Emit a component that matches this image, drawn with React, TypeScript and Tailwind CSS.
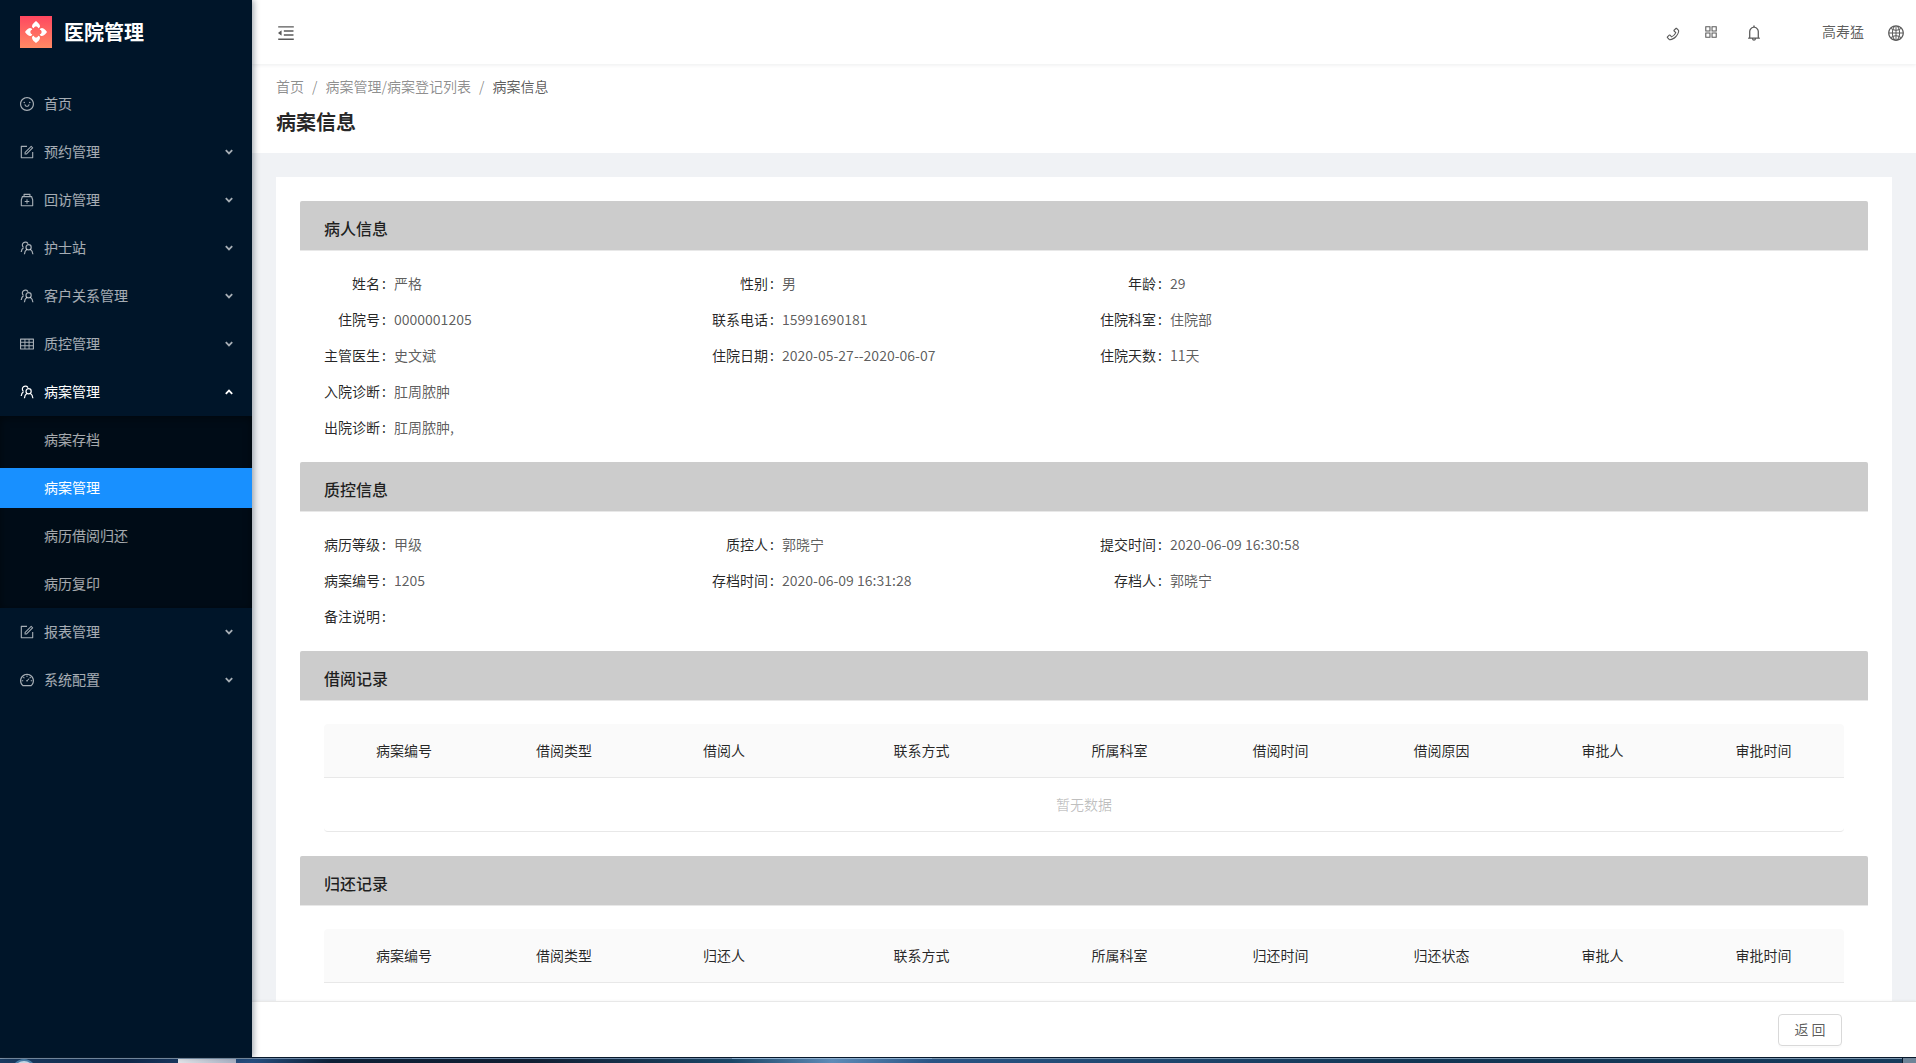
import { useState } from 'react'
import type { ComponentType, ReactNode } from 'react'
import {
  AiOutlineAppstore,
  AiOutlineBell,
  AiOutlineDashboard,
  AiOutlineForm,
  AiOutlineGlobal,
  AiOutlineMedicineBox,
  AiOutlineMenuFold,
  AiOutlinePhone,
  AiOutlineSmile,
  AiOutlineTable,
} from 'react-icons/ai'

interface IconProps {
  className?: string
}

interface MenuItem {
  key: string
  label: string
  icon: ComponentType<IconProps>
  hasChildren?: boolean
  children?: string[]
}

interface Field {
  label: string
  value: string
}

function PeopleIcon({ className }: IconProps) {
  return (
    <svg viewBox="-1 -1 16 16" width="16" height="16" fill="none" stroke="currentColor" strokeWidth="1.2" className={className}>
      <path d="M3.4 6.4A3 3 0 1 1 8 2.7M3.6 6.6C2.2 7.6 1.4 9.2 1.2 11" />
      <circle cx="8.6" cy="6.3" r="2.6" />
      <path d="M7 8.3C5.4 9.4 4.6 11 4.4 13.2M10.2 8.3C11.8 9.4 12.7 11 12.9 13.2" />
    </svg>
  )
}

function Chevron({ open }: { open: boolean }) {
  return (
    <svg viewBox="0 0 8 6" width="8" height="6" fill="none" stroke="currentColor" strokeWidth="1.8">
      <path d={open ? 'M0.8 4.8L4 1.6L7.2 4.8' : 'M0.8 1.2L4 4.4L7.2 1.2'} />
    </svg>
  )
}

function Logo() {
  const petal =
    'M16 5C17.3 6 19.8 8 20 10C20 11.3 19.2 12.2 18.2 12.2C17.9 11 17.2 10.4 16 10.4C14.8 10.4 14.1 11 13.8 12.2C12.8 12.2 12 11.3 12 10C12.2 8 14.7 6 16 5Z'
  return (
    <svg viewBox="0 0 32 32" width="32" height="32">
      <defs>
        <linearGradient id="logo-bg" x1="0" y1="0" x2="0" y2="1">
          <stop offset="0" stopColor="#ff4760" />
          <stop offset="1" stopColor="#ff8a64" />
        </linearGradient>
      </defs>
      <rect width="32" height="32" fill="url(#logo-bg)" />
      <g fill="#fff">
        <path d={petal} />
        <path d={petal} transform="rotate(90 16 16)" />
        <path d={petal} transform="rotate(180 16 16)" />
        <path d={petal} transform="rotate(270 16 16)" />
      </g>
    </svg>
  )
}

const menu: MenuItem[] = [
  { key: 'home', label: '首页', icon: AiOutlineSmile },
  { key: 'booking', label: '预约管理', icon: AiOutlineForm, hasChildren: true },
  { key: 'revisit', label: '回访管理', icon: AiOutlineMedicineBox, hasChildren: true },
  { key: 'nurse', label: '护士站', icon: PeopleIcon, hasChildren: true },
  { key: 'crm', label: '客户关系管理', icon: PeopleIcon, hasChildren: true },
  { key: 'quality', label: '质控管理', icon: AiOutlineTable, hasChildren: true },
  {
    key: 'records',
    label: '病案管理',
    icon: PeopleIcon,
    hasChildren: true,
    children: ['病案存档', '病案管理', '病历借阅归还', '病历复印'],
  },
  { key: 'reports', label: '报表管理', icon: AiOutlineForm, hasChildren: true },
  { key: 'system', label: '系统配置', icon: AiOutlineDashboard, hasChildren: true },
]

const patientRows: Field[][] = [
  [
    { label: '姓名', value: '严格' },
    { label: '性别', value: '男' },
    { label: '年龄', value: '29' },
  ],
  [
    { label: '住院号', value: '0000001205' },
    { label: '联系电话', value: '15991690181' },
    { label: '住院科室', value: '住院部' },
  ],
  [
    { label: '主管医生', value: '史文斌' },
    { label: '住院日期', value: '2020-05-27--2020-06-07' },
    { label: '住院天数', value: '11天' },
  ],
  [{ label: '入院诊断', value: '肛周脓肿' }],
  [{ label: '出院诊断', value: '肛周脓肿,' }],
]

const qualityRows: Field[][] = [
  [
    { label: '病历等级', value: '甲级' },
    { label: '质控人', value: '郭晓宁' },
    { label: '提交时间', value: '2020-06-09 16:30:58' },
  ],
  [
    { label: '病案编号', value: '1205' },
    { label: '存档时间', value: '2020-06-09 16:31:28' },
    { label: '存档人', value: '郭晓宁' },
  ],
  [{ label: '备注说明', value: '' }],
]

const borrowColumns = ['病案编号', '借阅类型', '借阅人', '联系方式', '所属科室', '借阅时间', '借阅原因', '审批人', '审批时间']
const returnColumns = ['病案编号', '借阅类型', '归还人', '联系方式', '所属科室', '归还时间', '归还状态', '审批人', '审批时间']

function Sidebar() {
  const [openKey, setOpenKey] = useState('records')
  const [selected, setSelected] = useState('病案管理')

  return (
    <aside className="relative z-10 w-[252px] shrink-0 bg-[#001529] shadow-[2px_0_6px_rgba(0,21,41,0.35)]">
      <a href="#home" className="flex h-16 items-center gap-3 pl-5 text-white">
        <Logo />
        <span className="text-xl font-bold">医院管理</span>
      </a>
      <nav className="pt-4">
        {menu.map((item) => {
          const Icon = item.icon
          const open = openKey === item.key
          return (
            <div key={item.key}>
              <button
                type="button"
                onClick={() => setOpenKey(open ? '' : item.key)}
                className={`flex h-12 w-full items-center gap-[9px] px-[19px] text-left ${open ? 'text-white' : 'text-white/65'}`}
              >
                <Icon className="size-4" />
                <span className="flex-1 pb-0.5">{item.label}</span>
                {item.hasChildren && <Chevron open={open} />}
              </button>
              {open && item.children && (
                <ul className="bg-[#000c17] shadow-[inset_0_2px_8px_rgba(0,0,0,0.45)]">
                  {item.children.map((child) => (
                    <li key={child} className="py-1">
                      <a
                        href={`#${child}`}
                        onClick={() => setSelected(child)}
                        className={`flex h-10 items-center pb-0.5 pl-11 ${selected === child ? 'bg-[#1890ff] text-white' : 'text-white/65'}`}
                      >
                        {child}
                      </a>
                    </li>
                  ))}
                </ul>
              )}
            </div>
          )
        })}
      </nav>
    </aside>
  )
}

function TopBar() {
  return (
    <header className="relative flex h-16 shrink-0 items-center justify-between bg-white pr-[11px] pl-6 text-black/65 shadow-[0_1px_4px_rgba(0,21,41,0.08)]">
      <button type="button" aria-label="收起菜单" className="pt-0.5">
        <AiOutlineMenuFold className="size-5" />
      </button>
      <div className="flex items-center">
        <button type="button" aria-label="电话" className="mr-[22px] pt-1">
          <AiOutlinePhone className="size-4" />
        </button>
        <button type="button" aria-label="应用" className="mr-[26px]">
          <AiOutlineAppstore className="size-4" />
        </button>
        <button type="button" aria-label="通知" className="mr-[59px] pt-0.5">
          <AiOutlineBell className="size-[18px]" />
        </button>
        <a href="#account" className="mr-[23px] pb-0.5">
          高寿猛
        </a>
        <button type="button" aria-label="语言" className="pt-0.5">
          <AiOutlineGlobal className="size-[18px]" />
        </button>
      </div>
    </header>
  )
}

function PageHeader() {
  return (
    <div className="bg-white px-6 pt-[11px] pb-[15px]">
      <nav aria-label="面包屑" className="flex h-[22px] items-center gap-2 text-black/45">
        <a href="#home">首页</a>
        <span>/</span>
        <a href="#list">病案管理/病案登记列表</a>
        <span>/</span>
        <span className="text-black/65">病案信息</span>
      </nav>
      <h1 className="mt-[9px] text-xl leading-8 font-bold text-black/85">病案信息</h1>
    </div>
  )
}

function Section({ title, children }: { title: string; children: ReactNode }) {
  return (
    <section>
      <h2 className="-mb-px flex h-[50px] items-center rounded-t-xs border-b border-[#e8e8e8] bg-[#ccc] px-6 pt-1 text-base font-medium text-black/85">
        {title}
      </h2>
      <div className="p-6">{children}</div>
    </section>
  )
}

function FieldRows({ rows }: { rows: Field[][] }) {
  return (
    <div className="-mb-4">
      {rows.map((row) => (
        <dl key={row[0].label} className="grid grid-cols-4 gap-x-8 pb-[18px] leading-[18px]">
          {row.map((field) => (
            <div key={field.label} className="flex">
              <dt className="mr-2 w-[62px] shrink-0 text-right text-black/85">
                {field.label}
                <span className="ml-0.5">:</span>
              </dt>
              <dd className="text-black/65">{field.value}</dd>
            </div>
          ))}
        </dl>
      ))}
    </div>
  )
}

function RecordTable({ columns, emptyText }: { columns: string[]; emptyText?: string }) {
  return (
    <table className="w-full table-fixed border-separate border-spacing-0">
      <colgroup>
        <col className="w-[160px]" />
        <col className="w-[160px]" />
        <col className="w-[160px]" />
        <col className="w-[235px]" />
      </colgroup>
      <thead>
        <tr>
          {columns.map((column) => (
            <th
              key={column}
              className="h-[54px] border-b border-[#e8e8e8] bg-[#fafafa] pb-0.5 font-normal text-black/85 first:rounded-tl last:rounded-tr"
            >
              {column}
            </th>
          ))}
        </tr>
      </thead>
      {emptyText && (
        <tbody>
          <tr>
            <td
              colSpan={columns.length}
              className="h-[54px] rounded-b border-b border-[#e8e8e8] pb-0.5 text-center text-black/25"
            >
              {emptyText}
            </td>
          </tr>
        </tbody>
      )}
    </table>
  )
}

function Taskbar() {
  return (
    <div className="flex h-1.5 shrink-0 overflow-hidden border-t border-[#0a1a2c]">
      <div className="flex w-[252px] items-start border-t border-[#7d93a8] bg-linear-to-r from-[#1a3c62] via-[#10294a] to-[#264f80]">
        <div className="ml-3 h-6 w-6 rounded-full border-2 border-[#4a7fa8] bg-[#c5d9e8]" />
        <div className="ml-[142px] h-6 w-[58px] bg-linear-to-r from-[#e4e6ea] to-[#a9b2c4]" />
      </div>
      <div className="w-20 border-t border-[#6f8aa8] bg-linear-to-r from-[#264f80] to-[#0d2036]" />
      <div className="w-[400px] border-t border-[#6f8aa8] bg-linear-to-r from-[#0d2036] via-[#101f33] to-[#1b4767]" />
      <div className="w-[200px] border-t border-[#8fb0cf] bg-linear-to-r from-[#1b4767] via-[#5f8cb8] to-[#2a5585]" />
      <div className="flex-1 border-t border-[#7d98b0] bg-linear-to-r from-[#2a5585] via-[#123653] to-[#173b5c]" />
      <div className="w-3.5 border-l border-[#0a1a2c] bg-[#6f8498]" />
    </div>
  )
}

export default function App() {
  return (
    <div className="flex h-screen flex-col font-['Noto_Sans_CJK_SC',sans-serif] text-sm text-black/65">
      <div className="flex min-h-0 flex-1">
        <Sidebar />
        <div className="flex min-w-0 flex-1 flex-col bg-[#f0f2f5]">
          <TopBar />
          <main className="min-h-0 flex-1 overflow-y-auto [scrollbar-width:none]">
            <PageHeader />
            <div className="m-6 bg-white p-6">
              <Section title="病人信息">
                <FieldRows rows={patientRows} />
              </Section>
              <Section title="质控信息">
                <FieldRows rows={qualityRows} />
              </Section>
              <Section title="借阅记录">
                <RecordTable columns={borrowColumns} emptyText="暂无数据" />
              </Section>
              <Section title="归还记录">
                <RecordTable columns={returnColumns} />
              </Section>
            </div>
          </main>
          <footer className="flex h-14 shrink-0 items-center justify-end border-t border-[#e8e8e8] bg-white pr-[74px] shadow-[0_-1px_2px_rgba(0,0,0,0.03)]">
            <button
              type="button"
              className="h-8 w-16 rounded border border-[#d9d9d9] bg-white pb-0.5 shadow-[0_2px_0_rgba(0,0,0,0.015)]"
            >
              返 回
            </button>
          </footer>
        </div>
      </div>
      <Taskbar />
    </div>
  )
}
